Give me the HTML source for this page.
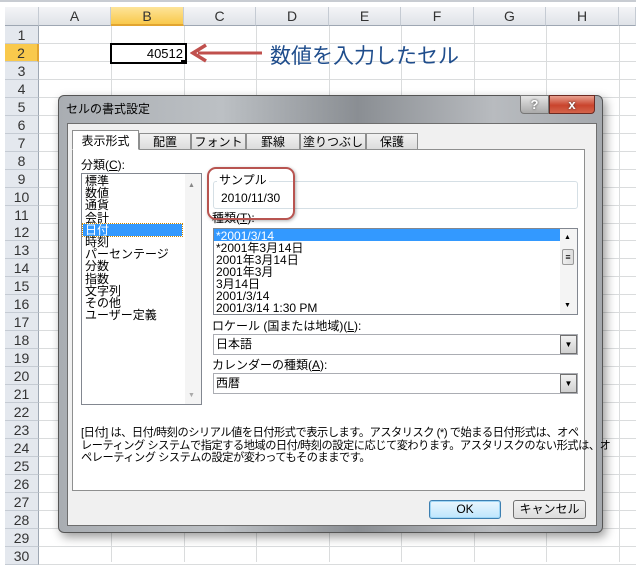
<!DOCTYPE html><html><head><meta charset="utf-8"><style>
body{margin:0;width:636px;height:562px;overflow:hidden;background:#fff;font-family:"Liberation Sans","Noto Sans CJK JP",sans-serif;position:relative}
.a{position:absolute}
.ch{position:absolute;top:7px;height:19px;background:linear-gradient(#f4f5f7,#dfe3e8);border-right:1px solid #c5cbd3;border-bottom:1px solid #9ea7b3;font-size:14px;color:#333;text-align:center;line-height:19px;box-sizing:border-box}
.rh{position:absolute;left:5px;width:34px;height:18px;background:#e4e8ee;border-bottom:1px solid #c5cbd3;border-right:1px solid #9ea7b3;font-size:14px;color:#333;text-align:center;line-height:18px;box-sizing:border-box}
.vl{position:absolute;top:26px;bottom:0;width:1px;background:#dadcdd}
.hl{position:absolute;left:39px;right:0;height:1px;background:#dadcdd}
.t{font-size:12px;color:#000;line-height:12px;white-space:nowrap}
.tab{position:absolute;top:133px;height:16px;border:1px solid #8e8f8f;border-bottom:none;background:linear-gradient(#f2f2f2,#dcdcdc);font-size:12px;text-align:center;line-height:16px;box-sizing:border-box}
</style></head><body>
<div class="a" style="left:0;top:0;width:636px;height:2px;background:#c8ccd2"></div>
<div class="ch" style="left:5px;width:34px"></div>
<div class="ch" style="left:39px;width:72px">A</div>
<div class="ch" style="left:111px;width:73px;background:linear-gradient(#fde49a,#f9c94c);border-bottom:2px solid #e2a530">B</div>
<div class="ch" style="left:184px;width:72px">C</div>
<div class="ch" style="left:256px;width:73px">D</div>
<div class="ch" style="left:329px;width:72px">E</div>
<div class="ch" style="left:401px;width:73px">F</div>
<div class="ch" style="left:474px;width:72px">G</div>
<div class="ch" style="left:546px;width:73px">H</div>
<div class="ch" style="left:619px;width:17px"></div>
<div class="vl" style="left:111px"></div><div class="vl" style="left:184px"></div><div class="vl" style="left:256px"></div><div class="vl" style="left:329px"></div><div class="vl" style="left:401px"></div><div class="vl" style="left:474px"></div><div class="vl" style="left:546px"></div><div class="vl" style="left:619px"></div>
<div id="rows"></div>
<script>
var h='';for(var i=1;i<=30;i++){var y=26+(i-1)*17.95;h+='<div class="rh" style="top:'+y+'px'+(i==2?';background:#f9c94c;border-right:2px solid #e2a530':'')+'">'+i+'</div><div class="hl" style="top:'+(y+17)+'px"></div>';}document.getElementById('rows').innerHTML=h;
</script>
<div class="a" style="left:110px;top:43px;width:71px;height:17px;border:2px solid #000;font-size:13px;text-align:right;line-height:17px;padding-right:2px;box-sizing:content-box;background:#fff">40512</div>
<div class="a" style="left:181px;top:60px;width:4px;height:4px;background:#000"></div>
<svg class="a" style="left:190px;top:43px" width="75" height="20"><line x1="8" y1="10" x2="72" y2="10" stroke="#c0504d" stroke-width="3"/><path d="M16 2 L3 10 L16 18" fill="none" stroke="#c0504d" stroke-width="3.5"/></svg>
<div class="a" style="left:270px;top:40px;font-size:21px;color:#1f4d8c;white-space:nowrap">数値を入力したセル</div>
<div class="a" style="left:58px;top:95px;width:545px;height:438px;border-radius:6px;background:linear-gradient(90deg,#a9adb2,#bcc0c4 30%,#8a8e93 55%,#b8bbbf 80%,#a5a9ae);border:1px solid #555;box-shadow:3px 4px 10px rgba(0,0,0,.4);box-sizing:border-box"></div>
<div class="a t" style="left:66px;top:103px;font-size:12px">セルの書式設定</div>
<div class="a" style="left:520px;top:95px;width:29px;height:19px;border:1px solid #777;border-radius:0 0 0 4px;background:linear-gradient(#e4e4e4,#aaa);box-sizing:border-box;text-align:center;font-weight:bold;font-size:13px;color:#fff;line-height:17px;text-shadow:0 0 2px #333">?</div>
<div class="a" style="left:549px;top:95px;width:46px;height:19px;border:1px solid #6b2a22;border-radius:0 0 4px 0;background:linear-gradient(#e8a08f,#c9442d 55%,#d4654c);box-sizing:border-box;text-align:center;font-weight:bold;font-size:13px;color:#fff;line-height:17px;text-shadow:0 0 2px #333">x</div>
<div class="a" style="left:67px;top:123px;width:530px;height:403px;background:#f0f0f0;border:1px solid #6e6e6e;box-sizing:border-box"></div>
<div class="a" style="left:72px;top:149px;width:513px;height:342px;background:#fff;border:1px solid #8e8f8f;box-sizing:border-box"></div>
<div class="tab" style="left:72px;top:130px;height:20px;width:67px;background:#fff;border-bottom:1px solid #fff;line-height:20px">表示形式</div>
<div class="tab" style="left:139px;width:52px">配置</div>
<div class="tab" style="left:191px;width:55px">フォント</div>
<div class="tab" style="left:246px;width:54px">罫線</div>
<div class="tab" style="left:300px;width:66px">塗りつぶし</div>
<div class="tab" style="left:366px;width:52px">保護</div>
<div class="a t" style="left:81px;top:159px">分類(<u>C</u>):</div>
<div class="a" style="left:81px;top:173px;width:121px;height:232px;border:1px solid #828790;box-sizing:border-box;background:#fff"></div>
<div class="a" style="left:185px;top:174px;width:16px;height:230px;background:#f4f4f4"></div>
<div class="a" style="left:188px;top:182px;font-size:7px;color:#888">▲</div>
<div class="a" style="left:188px;top:392px;font-size:7px;color:#aaa">▼</div>
<div class="a" style="left:83px;top:224px;width:99px;height:12px;background:#3399ff;outline:1px dotted #c80"></div>
<div class="a t" style="left:85px;top:175px;line-height:12.2px">標準<br>数値<br>通貨<br>会計<br><span style="color:#fff">日付</span><br>時刻<br>パーセンテージ<br>分数<br>指数<br>文字列<br>その他<br>ユーザー定義</div>
<div class="a" style="left:213px;top:181px;width:365px;height:28px;border:1px solid #d5dfe5;border-radius:3px;box-sizing:border-box"></div>
<div class="a t" style="left:217px;top:174px;background:#fff;padding:0 2px">サンプル</div>
<div class="a t" style="left:221px;top:192px">2010/11/30</div>
<div class="a t" style="left:212px;top:212px">種類(<u>T</u>):</div>
<div class="a" style="left:207px;top:167px;width:88px;height:53px;border:2px solid #b85450;border-radius:9px;box-sizing:border-box;box-shadow:1px 1px 3px rgba(0,0,0,.3)"></div>
<div class="a" style="left:213px;top:228px;width:365px;height:87px;border:1px solid #828790;box-sizing:border-box;background:#fff"></div>
<div class="a" style="left:214px;top:229px;width:346px;height:12px;background:#3399ff"></div>
<div class="a" style="left:560px;top:229px;width:17px;height:85px;background:#f4f4f4"></div>
<div class="a" style="left:562px;top:249px;width:12px;height:16px;border:1px solid #999;border-radius:2px;background:linear-gradient(90deg,#eee,#ddd);box-sizing:border-box;font-size:9px;text-align:center;line-height:14px">≡</div>
<div class="a" style="left:564px;top:234px;font-size:7px">▲</div>
<div class="a" style="left:564px;top:302px;font-size:7px">▼</div>
<div class="a t" style="left:216px;top:230px;line-height:12px"><span style="color:#fff">*2001/3/14</span><br>*2001年3月14日<br>2001年3月14日<br>2001年3月<br>3月14日<br>2001/3/14<br>2001/3/14 1:30 PM</div>
<div class="a t" style="left:212px;top:320px">ロケール (国または地域)(<u>L</u>):</div>
<div class="a" style="left:213px;top:334px;width:365px;height:21px;border:1px solid #abadb3;box-sizing:border-box;background:#fff"></div>
<div class="a t" style="left:216px;top:338px">日本語</div>
<div class="a" style="left:560px;top:335px;width:17px;height:19px;border:1px solid #707070;box-sizing:border-box;background:linear-gradient(#f2f2f2,#d0d0d0);font-size:8px;text-align:center;line-height:17px">▼</div>
<div class="a t" style="left:212px;top:359px">カレンダーの種類(<u>A</u>):</div>
<div class="a" style="left:213px;top:373px;width:365px;height:21px;border:1px solid #abadb3;box-sizing:border-box;background:#fff"></div>
<div class="a t" style="left:216px;top:377px">西暦</div>
<div class="a" style="left:560px;top:374px;width:17px;height:19px;border:1px solid #707070;box-sizing:border-box;background:linear-gradient(#f2f2f2,#d0d0d0);font-size:8px;text-align:center;line-height:17px">▼</div>
<div class="a t" style="left:81px;top:427px;line-height:12.5px;font-size:11.2px;letter-spacing:-0.45px">[日付] は、日付/時刻のシリアル値を日付形式で表示します。アスタリスク (*) で始まる日付形式は、オペ<br>レーティング システムで指定する地域の日付/時刻の設定に応じて変わります。アスタリスクのない形式は、オ<br>ペレーティング システムの設定が変わってもそのままです。</div>
<div class="a" style="left:429px;top:500px;width:72px;height:19px;border:1px solid #3c7fb1;border-radius:3px;box-sizing:border-box;background:linear-gradient(#eaf6fd,#bee6fd);font-size:12px;text-align:center;line-height:17px;box-shadow:inset 0 0 0 1px #9fd6f5">OK</div>
<div class="a" style="left:513px;top:500px;width:73px;height:19px;border:1px solid #707070;border-radius:3px;box-sizing:border-box;background:linear-gradient(#f2f2f2,#dcdcdc);font-size:12px;text-align:center;line-height:17px">キャンセル</div>
</body></html>
